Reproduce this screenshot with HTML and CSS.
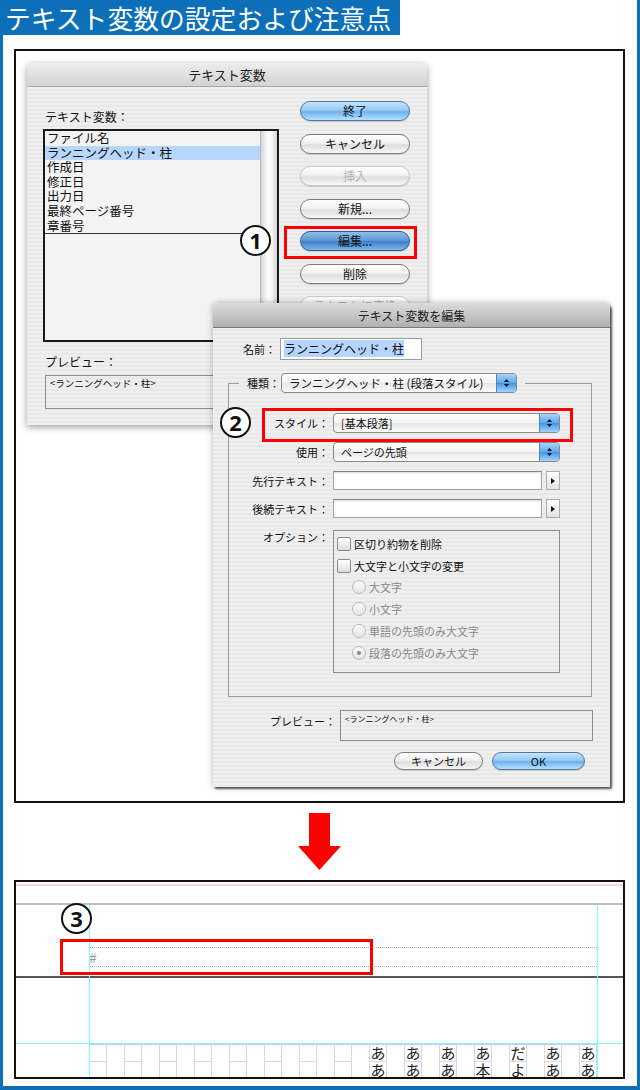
FILE: index.html
```html
<!doctype html>
<html lang="ja">
<head>
<meta charset="utf-8">
<title>テキスト変数の設定および注意点</title>
<link rel="stylesheet" href="styles.css">
</head>
<body>
<div class="frame">
	<h1 class="heading">テキスト変数の設定および注意点</h1>

	<div class="shot">
		<div class="win dlg1">
			<div class="titlebar">テキスト変数</div>
			<div class="dlg1-body">
				<div class="col-left">
					<p class="lbl1">テキスト変数：</p>
					<div class="listbox">
						<ul class="varlist">
							<li>ファイル名</li>
							<li class="on">ランニングヘッド・柱</li>
							<li>作成日</li>
							<li>修正日</li>
							<li>出力日</li>
							<li>最終ページ番号</li>
							<li>章番号</li>
						</ul>
						<div class="scroll"></div>
					</div>
					<p class="lbl1 prev-lbl">プレビュー：</p>
					<div class="prev1">&lt;ランニングヘッド・柱&gt;</div>
				</div>
				<div class="col-btns">
					<div class="abtn blue">終了</div>
					<div class="abtn">キャンセル</div>
					<div class="abtn off">挿入</div>
					<div class="abtn">新規...</div>
					<div class="abtn deep">編集...</div>
					<div class="abtn">削除</div>
					<div class="abtn off">テキストに変換</div>
				</div>
			</div>
		</div>

		<div class="win dlg2">
			<div class="titlebar">テキスト変数を編集</div>
			<div class="dlg2-body">
				<div class="namerow">
					<span class="lbl2">名前：</span>
					<div class="name"><span class="hl">ランニングヘッド・柱</span></div>
				</div>
				<fieldset class="group">
					<legend>
						<span class="lbl2">種類：</span>
						<div class="pop kind">
							<span class="txt">ランニングヘッド・柱 (段落スタイル)</span>
							<span class="step"><svg width="7" height="10" viewBox="0 0 7 10"><path d="M3.5 1L6 4H1Z M1 6H6L3.5 9Z" fill="#111"/></svg></span>
						</div>
					</legend>
					<div class="frow first">
						<span class="lbl2">スタイル：</span>
						<div class="pop">
							<span class="txt">[基本段落]</span>
							<span class="step"><svg width="7" height="10" viewBox="0 0 7 10"><path d="M3.5 1L6 4H1Z M1 6H6L3.5 9Z" fill="#111"/></svg></span>
						</div>
					</div>
					<div class="frow">
						<span class="lbl2">使用：</span>
						<div class="pop">
							<span class="txt">ページの先頭</span>
							<span class="step"><svg width="7" height="10" viewBox="0 0 7 10"><path d="M3.5 1L6 4H1Z M1 6H6L3.5 9Z" fill="#111"/></svg></span>
						</div>
					</div>
					<div class="frow">
						<span class="lbl2">先行テキスト：</span>
						<div class="tin">
							<div class="tfield"></div>
							<div class="mini"><svg width="4" height="6" viewBox="0 0 4 6"><path d="M0 0L4 3L0 6Z" fill="#111"/></svg></div>
						</div>
					</div>
					<div class="frow">
						<span class="lbl2">後続テキスト：</span>
						<div class="tin">
							<div class="tfield"></div>
							<div class="mini"><svg width="4" height="6" viewBox="0 0 4 6"><path d="M0 0L4 3L0 6Z" fill="#111"/></svg></div>
						</div>
					</div>
					<div class="frow opts">
						<span class="lbl2">オプション：</span>
						<div class="optbox">
							<div class="opt"><span class="cb"></span>区切り約物を削除</div>
							<div class="opt"><span class="cb"></span>大文字と小文字の変更</div>
							<div class="opt sub"><span class="rd"></span>大文字</div>
							<div class="opt sub"><span class="rd"></span>小文字</div>
							<div class="opt sub"><span class="rd"></span>単語の先頭のみ大文字</div>
							<div class="opt sub"><span class="rd on"></span>段落の先頭のみ大文字</div>
						</div>
					</div>
				</fieldset>
				<div class="prow">
					<span class="lbl2">プレビュー：</span>
					<div class="prev2">&lt;ランニングヘッド・柱&gt;</div>
				</div>
				<div class="btns2">
					<div class="abtn b-cancel">キャンセル</div>
					<div class="abtn blue b-ok">OK</div>
				</div>
			</div>
		</div>

		<div class="num n1">1</div>
		<div class="mark m1"></div>
		<div class="num n2">2</div>
		<div class="mark m2"></div>
	</div>

	<svg class="arrow" width="44" height="57" viewBox="0 0 44 57"><path d="M11 0H32V33H43L21.5 57L0 33H11Z" fill="#f00"/></svg>

	<div class="layout">
		<div class="rule pink"></div>
		<div class="rule gray"></div>
		<div class="tframe">
			<div class="dots"></div>
			<div class="hash">#</div>
			<div class="dots"></div>
		</div>
		<div class="rule dark"></div>
		<div class="blank"></div>
		<div class="rule cyan"></div>
		<div class="rule lav"></div>
		<div class="cells">
			<div class="cell"><span></span><span></span></div>
			<div class="cell"><span></span><span></span></div>
			<div class="cell"><span></span><span></span></div>
			<div class="cell"><span></span><span></span></div>
			<div class="cell"><span></span><span></span></div>
			<div class="cell"><span></span><span></span></div>
			<div class="cell"><span></span><span></span></div>
			<div class="cell"><span></span><span></span></div>
			<div class="cell"><span>あ</span><span>あ</span></div>
			<div class="cell"><span>あ</span><span>あ</span></div>
			<div class="cell"><span>あ</span><span>あ</span></div>
			<div class="cell"><span>あ</span><span>本</span></div>
			<div class="cell"><span>だ</span><span>よ</span></div>
			<div class="cell"><span>あ</span><span>あ</span></div>
			<div class="cell"><span>あ</span><span>あ</span></div>
		</div>
		<div class="guide g-left"></div>
		<div class="guide g-right"></div>
		<div class="num n3">3</div>
		<div class="mark m3"></div>
	</div>
</div>
</body>
</html>
```

FILE: styles.css
```css
body {
	margin: 0;
	font-family: "Noto Sans CJK JP", "Noto Sans", sans-serif;
	color: #111;
}

.frame {
	width: 640px;
	height: 1090px;
	box-sizing: border-box;
	border: 3px solid #0c6fb8;
	border-top: 0;
	border-bottom-width: 4px;
	background: #fff;
}

.heading {
	margin: 0 0 0 -3px;
	width: 400px;
	height: 35px;
	box-sizing: border-box;
	padding-left: 5px;
	background: #0c6fb8;
	color: #fff;
	font-weight: normal;
	font-size: 25.8px;
	line-height: 35px;
	white-space: nowrap;
}

/* top screenshot panel */
.shot {
	position: relative;
	margin: 14px 0 0 11px;
	width: 611px;
	height: 754px;
	box-sizing: border-box;
	border: 2px solid #111;
	overflow: hidden;
}

.win {
	position: absolute;
	overflow: hidden;
	border-radius: 5px 5px 0 0;
	background: repeating-linear-gradient(#efefef 0, #efefef 2px, #e9e9e9 2px, #e9e9e9 4px);
	box-shadow: 0 2px 7px rgba(0,0,0,.4);
}
.titlebar {
	height: 24px;
	box-sizing: border-box;
	border-bottom: 1px solid #a6a6a6;
	background: linear-gradient(#ededed, #d3d3d3);
	text-align: center;
	font-size: 13px;
	line-height: 24px;
	color: #222;
}

/* dialog 1 */
.dlg1 {
	left: 11px;
	top: 12px;
	width: 400px;
	height: 362px;
}
.dlg1-body {
	display: grid;
	grid-template-columns: 236px 110px;
	column-gap: 21px;
	padding-left: 16px;
}
.col-left {
	padding-top: 21px;
}
.lbl1 {
	margin: 0 0 0 2px;
	font-size: 12px;
	line-height: 18px;
}
.listbox {
	margin-top: 3px;
	height: 213px;
	box-sizing: border-box;
	border: 2px solid #1a1a1a;
	display: grid;
	grid-template-columns: 1fr 17px;
	background: #f3f3f3;
}
.varlist {
	list-style: none;
	margin: 0;
	padding: 0;
	align-self: start;
	border-bottom: 1px solid #333;
}
.varlist li {
	padding-left: 2px;
	font-size: 12.5px;
	line-height: 14.6px;
	white-space: nowrap;
}
.varlist li.on {
	background: #b7d6fb;
}
.scroll {
	border-left: 1px solid #bcbcbc;
	background: linear-gradient(90deg, #d6d6d6, #fbfbfb 40%, #fbfbfb 60%, #d2d2d2);
}
.prev-lbl {
	margin-top: 11px;
}
.prev1 {
	margin: 4px 0 0 2px;
	width: 300px;
	height: 34px;
	box-sizing: border-box;
	border: 1px solid #8c8c8c;
	padding: 2px 4px;
	font-size: 9.5px;
	line-height: 11px;
}
.col-btns {
	padding-top: 14px;
	display: flex;
	flex-direction: column;
	gap: 12.5px;
}

.abtn {
	height: 20px;
	box-sizing: border-box;
	border: 1px solid #7d7d7d;
	border-radius: 10px;
	background: linear-gradient(#fff, #f2f2f2 45%, #dedede 55%, #f6f6f6);
	box-shadow: 0 1px 1px rgba(0,0,0,.15);
	text-align: center;
	font-size: 12px;
	line-height: 18px;
	color: #111;
	white-space: nowrap;
}
.abtn.blue {
	border-color: #4e78a8;
	background: linear-gradient(#c8e4fb, #95caf3 45%, #6db2ee 55%, #b5e1ff);
}
.abtn.deep {
	border-color: #2f5c90;
	background: linear-gradient(#90bde9, #5e99d6 45%, #3f80c6 55%, #7cb6ea);
}
.abtn.off {
	color: #b4b4b4;
	border-color: #c8c8c8;
}

/* dialog 2 */
.dlg2 {
	left: 197px;
	top: 252px;
	width: 397px;
	height: 484px;
	box-shadow: 2px 2px 2px rgba(0,0,0,.6), 0 0 6px rgba(0,0,0,.3);
}
.dlg2 .titlebar {
	height: 25px;
	line-height: 25px;
	font-size: 12px;
	border-bottom-color: #7a7a7a;
	background: linear-gradient(#dcdcdc, #b0b0b0);
}
.dlg2-body {
	padding-top: 10px;
	font-size: 11px;
}
.lbl2 {
	text-align: right;
	white-space: nowrap;
	font-size: 11px;
	line-height: 14px;
}
.namerow {
	display: grid;
	grid-template-columns: 63px 142px;
	column-gap: 4px;
	align-items: center;
}
.name {
	height: 22px;
	box-sizing: border-box;
	border: 1px solid #9c9c9c;
	background: #fff;
	padding: 2px 3px;
	font-size: 12px;
	line-height: 16px;
	white-space: nowrap;
}
.name .hl {
	background: #b5d5ff;
}
.group {
	margin: 13px 0 0 15px;
	width: 364px;
	min-width: 0;
	box-sizing: border-box;
	padding: 0 0 23px;
	border: 1px solid #9c9c9c;
}
.group legend {
	margin-left: 10px;
	padding: 0 8px;
	display: flex;
	align-items: center;
	gap: 1px;
}
.pop {
	display: flex;
	align-items: center;
	height: 20px;
	box-sizing: border-box;
	border: 1px solid #8a8a8a;
	border-radius: 4px;
	overflow: hidden;
	padding-left: 7px;
	background: linear-gradient(#fff, #f3f3f3 50%, #e6e6e6 51%, #fbfbfb);
	font-size: 11px;
	line-height: 14px;
	white-space: nowrap;
}
.pop.kind {
	width: 236px;
	font-size: 11.5px;
}
.pop .txt {
	flex: 1;
}
.pop .step {
	width: 19px;
	align-self: stretch;
	display: flex;
	align-items: center;
	justify-content: center;
	border-left: 1px solid #5a82b0;
	background: linear-gradient(#a8d4f8, #5ea8ec 50%, #4494e5 51%, #a0d6ff);
}
.frow {
	display: grid;
	grid-template-columns: 100px 227px;
	column-gap: 4px;
	align-items: center;
	margin-top: 9px;
}
.frow.first {
	margin-top: 20px;
}
.frow.opts {
	margin-top: 12px;
	align-items: start;
}
.tin {
	display: flex;
	gap: 4px;
}
.tfield {
	flex: 1;
	height: 19px;
	box-sizing: border-box;
	border: 1px solid #a4a4a4;
	border-top-color: #858585;
	background: #fff;
	box-shadow: inset 0 1px 2px rgba(0,0,0,.15);
}
.mini {
	width: 14px;
	height: 19px;
	box-sizing: border-box;
	border: 1px solid #acacac;
	background: linear-gradient(#fff, #e2e2e2);
	display: flex;
	align-items: center;
	justify-content: center;
}
.optbox {
	height: 143px;
	box-sizing: border-box;
	border: 1px solid #8e8e8e;
	padding: 2px 0 0 3px;
}
.opt {
	display: flex;
	align-items: center;
	gap: 3px;
	height: 21.8px;
	font-size: 11px;
	white-space: nowrap;
}
.opt.sub {
	padding-left: 15px;
	color: #8a8a8a;
}
.cb {
	width: 14px;
	height: 14px;
	box-sizing: border-box;
	border: 1px solid #8a8a8a;
	border-radius: 2px;
	background: linear-gradient(#fff, #dedede);
}
.rd {
	position: relative;
	width: 14px;
	height: 14px;
	box-sizing: border-box;
	border: 1px solid #b9b9b9;
	border-radius: 50%;
	background: linear-gradient(#fbfbfb, #e4e4e4);
}
.rd.on:after {
	content: "";
	position: absolute;
	left: 4px;
	top: 4px;
	width: 4px;
	height: 4px;
	border-radius: 50%;
	background: #8a8a8a;
}
.prow {
	display: grid;
	grid-template-columns: 123px 253px;
	column-gap: 4px;
	margin-top: 13px;
}
.prow .lbl2 {
	padding-top: 4px;
}
.prev2 {
	height: 31px;
	box-sizing: border-box;
	border: 1px solid #8c8c8c;
	padding: 2px 4px;
	font-size: 8px;
	line-height: 11px;
}
.btns2 {
	display: flex;
	justify-content: flex-end;
	gap: 9px;
	padding-right: 25px;
	margin-top: 11px;
}
.btns2 .abtn {
	height: 18px;
	border-radius: 9px;
	font-size: 11px;
	line-height: 16px;
}
.b-cancel {
	width: 89px;
}
.b-ok {
	width: 93px;
}

/* numbered marks and red frames */
.num {
	position: absolute;
	width: 31px;
	height: 31px;
	box-sizing: border-box;
	border: 2px solid #111;
	border-radius: 50%;
	background: #fff;
	text-align: center;
	font: bold 22px/27px "Noto Sans", sans-serif;
	color: #111;
}
.mark {
	position: absolute;
	box-sizing: border-box;
	border: 3px solid #f00;
}
.n1 { left: 224px; top: 174px; }
.m1 { left: 268px; top: 175px; width: 133px; height: 33px; }
.n2 { left: 204px; top: 356px; }
.m2 { left: 246px; top: 357px; width: 311px; height: 34px; }

.arrow {
	display: block;
	margin: 10px auto 0;
}

/* bottom layout panel */
.layout {
	position: relative;
	margin: 10px 0 0 11px;
	width: 611px;
	height: 199px;
	box-sizing: border-box;
	border: 2px solid #111;
	overflow: hidden;
}
.rule.pink {
	margin-top: 2px;
	height: 2px;
	background: #fad4de;
}
.rule.gray {
	margin-top: 17px;
	height: 2px;
	background: #bdbdbd;
}
.tframe {
	height: 71px;
	box-sizing: border-box;
	padding-top: 42px;
	margin-left: 73px;
	width: 508px;
}
.dots {
	border-top: 1px dotted #b0b0b0;
}
.hash {
	height: 18px;
	line-height: 18px;
	font-size: 14px;
	color: #9c9ca8;
}
.rule.dark {
	height: 2px;
	background: #555;
}
.blank {
	height: 65px;
}
.rule.cyan {
	height: 1px;
	background: #7ff;
}
.rule.lav {
	margin-left: 73px;
	width: 508px;
	height: 1px;
	background: #c9c8f2;
}
.cells {
	display: flex;
	gap: 17px;
	margin-left: 73px;
}
.cell {
	width: 18px;
	box-sizing: border-box;
	border-left: 1px solid #d8d6e2;
	border-right: 1px solid #d8d6e2;
}
.cell span {
	display: block;
	height: 17px;
	box-sizing: border-box;
	border-bottom: 1px solid #d8d6e2;
	text-align: center;
	font-size: 15px;
	line-height: 16px;
	color: #222;
}
.guide {
	position: absolute;
	top: 23px;
	bottom: 0;
	width: 1px;
	background: #7ff;
}
.g-left { left: 73px; }
.g-right { left: 581px; }
.n3 { left: 45px; top: 21px; }
.m3 { left: 44px; top: 57px; width: 313px; height: 36px; }
```
